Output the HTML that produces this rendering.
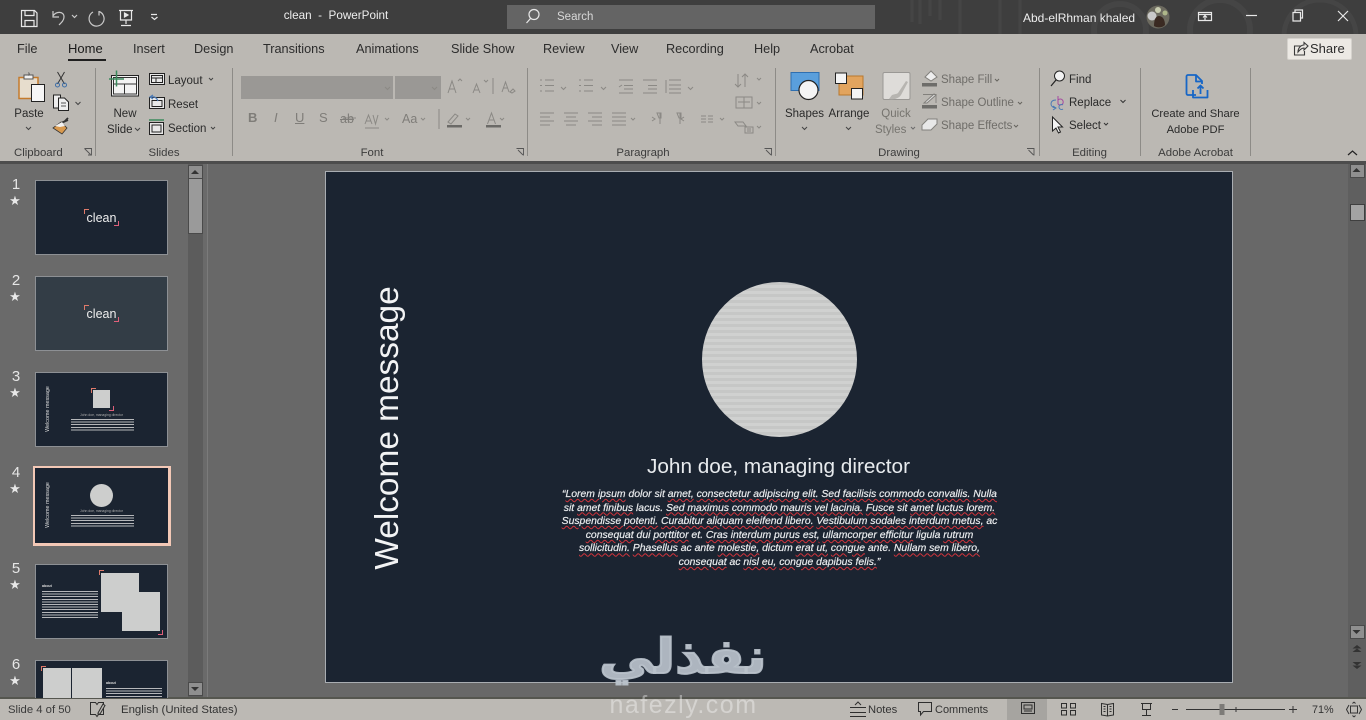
<!DOCTYPE html>
<html><head><meta charset="utf-8"><title>clean - PowerPoint</title>
<style>
html,body{margin:0;padding:0;width:1366px;height:720px;overflow:hidden;background:#686868;font-family:"Liberation Sans","DejaVu Sans",sans-serif}
.a{position:absolute}
.t{position:absolute;white-space:nowrap;font-size:11.5px;line-height:16px;color:#2a2a2a}
.c{text-align:center;transform:translateX(-50%)}
.g{color:#76746f}
.w{color:#eee}
.tab{font-size:12.7px;color:#2c2c2c}
.gl{font-size:11.4px;color:#3c3c3c}
.num{position:absolute;left:8px;width:16px;text-align:center;color:#e6e6e6;font-size:15px;line-height:16px}
.star{position:absolute;left:7px;width:16px;text-align:center;color:#e8e8e8;font-size:13px;line-height:12px}
.th{position:absolute;left:35px;width:131px;height:73px;background:#1b2431;border:1px solid #8d9094;overflow:hidden}
.th .x{position:absolute;white-space:nowrap}
.clean{left:0;width:131px;top:29px;text-align:center;color:#eee;font-size:12.5px;line-height:16px}
.tick{position:absolute;width:4px;height:4px}
.lines{position:absolute;opacity:.8;background:repeating-linear-gradient(#dcdcdc 0 1px,#1b2431 1px 2.6px)}
.gr{position:absolute;background:#cdcecd}
.sq{white-space:nowrap;text-align:center;width:500px;left:529.5px;position:absolute;font-style:italic;color:#e9ebed;font-size:10.4px;line-height:13.6px;font-family:"Liberation Sans",sans-serif;-webkit-text-stroke:.2px #e9ebed}
.sq u{text-decoration:underline wavy #d2343c 1px;text-underline-offset:1px}
</style></head>
<body>
<!-- backgrounds -->
<div class="a" style="left:0;top:0;width:1366px;height:34px;background:#3e3e3e"></div>
<div class="a" style="left:0;top:34px;width:1366px;height:127px;background:#bbb8b3"></div>
<div class="a" style="left:0;top:161px;width:1366px;height:3px;background:#4d4d4d"></div>
<div class="a" style="left:0;top:164px;width:188px;height:535px;background:#6a6a6a"></div>
<div class="a" style="left:188px;top:164px;width:15px;height:535px;background:#5c5c5c"></div>
<div class="a" style="left:203px;top:164px;width:5px;height:535px;background:#6a6a6a;border-right:1px solid #7b7b7b;box-sizing:border-box"></div>
<div class="a" style="left:208px;top:164px;width:1140px;height:533px;background:#686868"></div>
<div class="a" style="left:1348px;top:164px;width:18px;height:533px;background:#5f5f5f"></div>
<div class="a" style="left:0;top:697px;width:1366px;height:2px;background:#55564f"></div>
<div class="a" style="left:0;top:699px;width:1366px;height:21px;background:#bcb9b4"></div>
<div class="a" style="left:1007px;top:699px;width:40px;height:21px;background:#a6a4a0"></div>

<!-- titlebar background art -->
<svg class="a" style="left:0;top:0" width="1366" height="34" viewBox="0 0 1366 34" fill="none">
<g stroke="#454545" stroke-width="3">
<path d="M912 0v22M920 0v24M930 0v16M940 0v20M960 0v34M1000 0v34M1020 0v34"/>
<circle cx="1120" cy="30" r="26" stroke-width="6"/><circle cx="1220" cy="30" r="30" stroke-width="6"/><circle cx="1320" cy="36" r="36" stroke-width="5"/>
</g>
</svg>

<!-- search -->
<div class="a" style="left:507px;top:5px;width:368px;height:24px;background:#646464"></div>

<!-- slide thumbnails -->
<div class="num" style="top:177px">1</div><div class="star" style="top:195px">★</div>
<div class="num" style="top:273px">2</div><div class="star" style="top:291px">★</div>
<div class="num" style="top:369px">3</div><div class="star" style="top:387px">★</div>
<div class="num" style="top:465px">4</div><div class="star" style="top:483px">★</div>
<div class="num" style="top:561px">5</div><div class="star" style="top:579px">★</div>
<div class="num" style="top:657px">6</div><div class="star" style="top:675px">★</div>

<div class="th" style="top:180px"><div class="x clean">clean</div>
<div class="tick" style="left:48px;top:28px;border-left:1px solid #e07a6a;border-top:1px solid #e07a6a"></div>
<div class="tick" style="left:78px;top:40px;border-right:1px solid #e0607a;border-bottom:1px solid #e0607a"></div></div>
<div class="th" style="top:276px;background:#333d46"><div class="x clean">clean</div>
<div class="tick" style="left:48px;top:28px;border-left:1px solid #e07a6a;border-top:1px solid #e07a6a"></div>
<div class="tick" style="left:78px;top:40px;border-right:1px solid #e0607a;border-bottom:1px solid #e0607a"></div></div>
<div class="th" style="top:372px">
<div class="gr" style="left:57px;top:17px;width:17px;height:18px"></div>
<div class="tick" style="left:55px;top:15px;border-left:1px solid #e07a6a;border-top:1px solid #e07a6a"></div>
<div class="tick" style="left:73px;top:33px;border-right:1px solid #e0607a;border-bottom:1px solid #e0607a"></div>
<div class="x" style="left:-11px;top:33px;width:46px;text-align:center;color:#ddd;font-size:5.4px;line-height:6px;transform:rotate(-90deg)">Welcome message</div>
<div class="x" style="left:35px;top:40px;width:61px;text-align:center;color:#aaa;font-size:3.4px;line-height:4px">John doe, managing director</div>
<div class="lines" style="left:35px;top:46px;width:63px;height:13px"></div></div>
<div class="a" style="left:33px;top:466px;width:132px;height:74px;border:3px solid #f3c8b6"></div>
<div class="th" style="top:468px;border-color:#1b2431;height:73px">
<div class="a" style="left:54px;top:15px;width:23px;height:23px;border-radius:50%;background:#cdcecd"></div>
<div class="x" style="left:-11px;top:33px;width:46px;text-align:center;color:#ddd;font-size:5.4px;line-height:6px;transform:rotate(-90deg)">Welcome message</div>
<div class="x" style="left:35px;top:40px;width:61px;text-align:center;color:#aaa;font-size:3.4px;line-height:4px">John doe, managing director</div>
<div class="lines" style="left:35px;top:46px;width:63px;height:13px"></div></div>
<div class="th" style="top:564px">
<div class="gr" style="left:65px;top:8px;width:38px;height:39px"></div>
<div class="gr" style="left:86px;top:27px;width:38px;height:39px"></div>
<div class="tick" style="left:63px;top:5px;border-left:1px solid #e07a6a;border-top:1px solid #e07a6a"></div>
<div class="tick" style="left:122px;top:65px;border-right:1px solid #e0607a;border-bottom:1px solid #e0607a"></div>
<div class="x" style="left:6px;top:19px;color:#ddd;font-size:3.6px;line-height:5px;font-weight:bold">about</div>
<div class="lines" style="left:6px;top:26px;width:56px;height:27px"></div></div>
<div class="a" style="left:35px;top:660px;width:131px;height:37px;background:#1b2431;border-left:1px solid #8d9094;border-right:1px solid #8d9094;border-top:1px solid #8d9094;overflow:hidden">
<div class="gr" style="left:7px;top:7px;width:28px;height:40px"></div>
<div class="gr" style="left:36px;top:7px;width:30px;height:40px"></div>
<div class="tick" style="left:5px;top:5px;border-left:1px solid #e07a6a;border-top:1px solid #e07a6a"></div>
<div class="a" style="left:70px;top:20px;color:#ddd;font-size:3.6px;font-weight:bold;line-height:5px">about</div>
<div class="lines" style="left:70px;top:27px;width:56px;height:12px"></div></div>

<!-- main slide -->
<div class="a" style="left:325px;top:171px;width:906px;height:510px;background:#1b2431;border:1px solid #a9adb2"></div>
<div class="a" style="left:702px;top:282px;width:155px;height:155px;border-radius:50%;background:repeating-linear-gradient(#c6c7c6 0 3px,#d0d1d0 3px 6px)"></div>
<div class="t" style="left:388px;top:427.5px;font-size:33.4px;line-height:38px;color:#f2f3f4;transform:translate(-50%,-50%) rotate(-90deg)">Welcome message</div>
<div class="t c" style="left:778.5px;top:453.5px;font-size:20.75px;line-height:26px;color:#e8ebee">John doe, managing director</div>
<div class="sq" style="top:488px">“<u>Lorem ipsum</u> dolor sit <u>amet,</u> <u>consectetur adipiscing elit.</u> <u>Sed facilisis commodo convallis.</u> <u>Nulla</u></div>
<div class="sq" style="top:501.6px">sit <u>amet finibus</u> lacus. <u>Sed maximus commodo mauris vel lacinia.</u> <u>Fusce</u> sit <u>amet luctus lorem.</u></div>
<div class="sq" style="top:515.2px"><u>Suspendisse potenti.</u> <u>Curabitur aliquam eleifend libero.</u> <u>Vestibulum sodales interdum metus,</u> ac</div>
<div class="sq" style="top:528.8px"><u>consequat</u> dui <u>porttitor</u> et. <u>Cras interdum purus est,</u> <u>ullamcorper efficitur</u> ligula <u>rutrum</u></div>
<div class="sq" style="top:542.4px"><u>sollicitudin.</u> <u>Phasellus</u> ac ante <u>molestie,</u> dictum <u>erat ut,</u> <u>congue</u> ante. <u>Nullam sem libero,</u></div>
<div class="sq" style="top:556px"><u>consequat</u> ac <u>nisl eu,</u> <u>congue dapibus felis.</u>”</div>

<!-- scrollbar parts -->
<div class="a" style="left:188px;top:165px;width:13px;height:12px;background:#8f8f8f;border:1px solid #4a4a4a"></div>
<div class="a" style="left:188px;top:178px;width:13px;height:54px;background:#9a9a9a;border:1px solid #4a4a4a"></div>
<div class="a" style="left:188px;top:682px;width:13px;height:12px;background:#8f8f8f;border:1px solid #4a4a4a"></div>
<div class="a" style="left:1350px;top:164px;width:13px;height:12px;background:#8f8f8f;border:1px solid #4a4a4a"></div>
<div class="a" style="left:1350px;top:204px;width:13px;height:15px;background:#a3a3a3;border:1px solid #3f3f3f"></div>
<div class="a" style="left:1350px;top:625px;width:13px;height:12px;background:#8f8f8f;border:1px solid #4a4a4a"></div>

<!-- group separators -->
<div class="a" style="left:95px;top:68px;width:1px;height:88px;background:#8d8b87"></div>
<div class="a" style="left:232px;top:68px;width:1px;height:88px;background:#8d8b87"></div>
<div class="a" style="left:527px;top:68px;width:1px;height:88px;background:#8d8b87"></div>
<div class="a" style="left:775px;top:68px;width:1px;height:88px;background:#8d8b87"></div>
<div class="a" style="left:1039px;top:68px;width:1px;height:88px;background:#8d8b87"></div>
<div class="a" style="left:1140px;top:68px;width:1px;height:88px;background:#8d8b87"></div>
<div class="a" style="left:1250px;top:68px;width:1px;height:88px;background:#8d8b87"></div>

<!-- font boxes -->
<div class="a" style="left:241px;top:76px;width:152px;height:23px;background:#9a9895"></div>
<div class="a" style="left:395px;top:76px;width:46px;height:23px;background:#9a9895"></div>
<div class="a" style="left:1287px;top:38px;width:65px;height:22px;background:#ece9e4;border:1px solid #d5d2cd;box-sizing:border-box;border-radius:2px"></div>

<!-- icon layer -->
<svg class="a" style="left:0;top:0" width="1366" height="720" viewBox="0 0 1366 720" fill="none">
<!-- QAT -->
<g stroke="#e8e8e8" stroke-width="1.2">
<path d="M21.5 10.5h13l2.500 2.500v13.500h-15.500z"/><path d="M25 10.500v5h9v-5M25 26.500v-6h9v6"/>
<path d="M53 11v6h6M53 16c3-5 11-5 11 1 0 3-2 5-5 8" stroke="#c9c9c9"/>
<path d="M72 15l2.500 2.500L77 15" stroke="#c9c9c9"/>
<path d="M99 11.500a7.500 7.500 0 1 1-6 .5M99 11v4.500" stroke="#c9c9c9"/>
<path d="M119 10.500h14M120.500 11v9h11v-9M126 20v4M121 25.500h10"/>
<path d="M124.500 13l3.500 2-3.500 2z" fill="#e8e8e8"/>
<path d="M151 14.500h6M151.500 17l3 2.500 3-2.500"/>
<!-- search -->
<circle cx="534" cy="14.500" r="5"/><path d="M530.500 18.500l-4 4.500"/>
<!-- window controls -->
<path d="M1198.500 12.500h13v8h-13zM1198.500 14.500h13M1205 20v-4M1203 17.500l2-2 2 2"/>
<path d="M1246 15.500h11"/>
<path d="M1293 12.500h7.500v8.500h-7.500zM1295 12v-2h7.500v8h-2"/>
<path d="M1338 11l10 10M1348 11l-10 10"/>
</g>
<circle cx="1158" cy="17" r="11.500" fill="#6c6a5f"/><circle cx="1158" cy="10" r="3" fill="#c9cdb0"/><circle cx="1152" cy="16" r="4.500" fill="#c9c9c9"/><path d="M1154 26c0-7 2-10 5-10s6 3 6 9c-3 3-8 3-11 1z" fill="#3a2a22"/>
<circle cx="1165" cy="13" r="2.500" fill="#aeb78a"/>
<!-- share icon -->
<g stroke="#3a3a3a" stroke-width="1.100"><path d="M1301 46h-6.500v9h10v-4"/><path d="M1298 52c0-4 3-7 6-7v-2.500l4 3.500-4 4V48c-2 0-4 1.500-6 4z"/></g>
<!-- clipboard -->
<path d="M19 77.500h19v21H19z" fill="#e7ddcd" stroke="#c57b2c" stroke-width="1.500"/>
<path d="M24 75h9v4h-9z" fill="#f2f2f2" stroke="#555"/><path d="M28.500 72.500a2 2 0 0 1 0 3" stroke="#555"/>
<path d="M31.500 84.500h13v17h-13z" fill="#f6f6f6" stroke="#222"/>
<!-- scissors -->
<g stroke="#333"><path d="M57.500 72l7 12M64.500 72l-7 12"/></g><circle cx="57.500" cy="85" r="2" stroke="#3c6ea8"/><circle cx="64.500" cy="85" r="2" stroke="#3c6ea8"/>
<!-- copy -->
<g stroke="#222" fill="#efefef"><path d="M53.500 95h7v13h-7z"/><path d="M58.500 98h6l4 4v8.500h-10z"/></g>
<path d="M61 103h5M61 106h5" stroke="#555"/>
<path d="M75.500 102l2.500 2.500 2.500-2.500" stroke="#444"/>
<!-- painter -->
<path d="M53 128l8-6 6 6-5 6z" fill="#d99a4f" stroke="#333" stroke-width=".8"/><path d="M61 123l7-3M64 122l4-4" stroke="#333" stroke-width="1.800"/><path d="M55 126l7-4 3 4-5 1z" fill="#f2f2f2"/>
<path d="M26 127l2.500 2.500 2.500-2.500" stroke="#444"/>
<!-- new slide -->
<path d="M111.500 75.500h27v20.500h-27z" fill="#f2f2f2" stroke="#222"/><path d="M113.500 77.500h23v16.500h-23z" stroke="#333"/><path d="M113.500 84h23M124.500 84v10" stroke="#333"/>
<path d="M116.500 70.500v16M109 79h15" stroke="#3b8a5c" stroke-width="1.500"/>
<path d="M135 128l2.500 2.500 2.500-2.500" stroke="#444"/>
<!-- layout/reset/section -->
<g stroke="#222"><path d="M149.500 73.500h15v11h-15z" fill="#e8e8e8"/><path d="M151.500 75.500h11v7h-11zM151.500 78h11M156 78v4"/>
<path d="M149.500 97.500h15v11h-15z" fill="#e8e8e8"/><path d="M152 100.500h10v6h-10z"/>
<path d="M149.500 122.500h14v12h-14z" fill="#e8e8e8"/><path d="M152 125h9v7h-9z"/></g>
<path d="M153 99l-3-2 3-2M150 97c5-1 7 1 8 4" stroke="#4a79b5" stroke-width="1.200"/>
<path d="M149 120h15" stroke="#3b8a5c" stroke-width="1.500"/>
<g stroke="#444"><path d="M209 78l2 2 2-2M211 127l2 2 2-2"/></g>
<!-- font area disabled -->
<g stroke="#8b8985">
<path d="M385 87l2.500 2.500L390 87M432 87l2.500 2.500L437 87"/>
<path d="M448 93l4-12 4 12M449.500 89h5M458 81l2-2 2 2M473 93l3.500-9 3.500 9M474.500 90h4M484 80l2 2 2-2"/>
<path d="M493 78v16"/>
<path d="M502 92l3.500-10 3.500 10M503 88h5M510 92l3-3 2 2-3 2z"/>
<path d="M343 118h13"/><path d="M365 124l3.500-9 3.500 9M366 121h5M373 115l2.500 9 2.500-9"/><path d="M365 128h14"/>
<path d="M385 118l2 2 2-2"/>
<path d="M421 118l2 2 2-2"/><path d="M439 109v20"/>
<path d="M466 118l2 2 2-2M500 118l2 2 2-2"/>
<path d="M448 122l7-8 3 2-7 8z"/><path d="M487.500 124l4-11 4 11M489 120h5"/>
</g>
<path d="M447 125h15v2.500h-15zM486 125h15v2.500h-15z" fill="#6b6a67"/>
<!-- paragraph -->
<g stroke="#8b8985">
<path d="M545 80h9M545 85.500h9M545 91h9M540 80h2M540 85.500h2M540 91h2"/><path d="M561 87l2.500 2.500L566 87"/>
<path d="M584 80h9M584 85.500h9M584 91h9M579 80h2M579 85.500h2M579 91h2"/><path d="M601 87l2.500 2.500L606 87"/>
<path d="M619 80h14M624 85.500h9M624 89h9M619 93h14M619 87l3-2"/>
<path d="M643 80h14M648 85.500h9M648 89h9M643 93h14"/>
<path d="M669 80h12M669 85h12M669 89h12M669 93h12M666 80v13"/><path d="M688 87l2.500 2.500L693 87"/>
<path d="M540 113h14M540 117h10M540 121h14M540 125h10"/>
<path d="M564 113h14M566 117h10M564 121h14M566 125h10"/>
<path d="M588 113h14M592 117h10M588 121h14M592 125h10"/>
<path d="M612 113h14M612 117h14M612 121h14M612 125h14"/><path d="M631 118l2 2 2-2"/>
<path d="M652 117l3 2-3 2M660 113v11M657 113h4v5h-2zM680 113v11M677 113h4v5h-2zM684 117l-3 2 3 2"/>
<path d="M701 116h5M701 119h5M701 122h5M708 116h5M708 119h5M708 122h5"/><path d="M720 118l2 2 2-2"/>
<path d="M738 74v13M735 84l3 3 3-3M745 74v13M742 77l3-3 3 3"/><path d="M757 78l2 2 2-2"/>
<path d="M736 97h16v11h-16zM744 97v11M738 102h12"/><path d="M757 102l2 2 2-2"/>
<path d="M735 122h8l3 4h-8zM745 127h8v6h-8zM747 129h4M747 131h4"/><path d="M757 126l2 2 2-2"/>
</g>
<!-- dialog launchers -->
<g stroke="#555" stroke-width=".9"><path d="M84.500 148.500h7v7M84.500 148.500l6 6M88 155h3.500"/><path d="M516.500 148.500h7v7M518 150l5 5"/><path d="M764.500 148.500h7v7M766 150l5 5"/><path d="M1027 148.500h7v7M1028.500 150l5 5"/></g>
<!-- shapes -->
<path d="M791 72.500h28v18h-28z" fill="#5a9fdc" stroke="#2f6fb0"/>
<circle cx="808.500" cy="90" r="9.500" fill="#f4f4f4" stroke="#222" stroke-width="1.200"/>
<path d="M802 127l2.500 2.500L807 127M846 127l2.500 2.500L851 127" stroke="#444"/>
<!-- arrange -->
<path d="M839 76h24v19h-24z" fill="#e2a45e" stroke="#b8772e"/>
<path d="M835.500 73h11v10.500h-11z" fill="#f4f4f4" stroke="#222"/><path d="M851.500 88.500h11v10.500h-11z" fill="#f4f4f4" stroke="#222"/>
<!-- quick styles -->
<rect x="883" y="72.500" width="27" height="27" rx="1.500" fill="#dedcd9" stroke="#9a9895"/><path d="M889 99l3-4c3-1 5-1 6-2l8-12 2 1-7 13c-2 3-6 5-12 4z" fill="#b7b5b1"/>
<path d="M911 127l2 2 2-2" stroke="#6a6a6a"/>
<!-- shape fill etc -->
<g stroke="#82807c"><path d="M925 77l6-6 6 6-6 4z" fill="#eeeeee"/><path d="M924 103l10-9 2 1-9 8z" fill="#dddddd"/><path d="M923 94.500h13v8.500" stroke-width=".9"/><path d="M922 125l6-6h9v5l-6 6h-9z" fill="#e8e8e8"/></g>
<path d="M922 83h15v3.500h-15zM922 105h15v3.500h-15z" fill="#6e6d6a"/>
<g stroke="#66645f"><path d="M995 79l2 2 2-2M1018 102l2 2 2-2M1014 125l2 2 2-2"/></g>
<!-- editing -->
<circle cx="1059.500" cy="76" r="5" fill="#f2f2f2" stroke="#222"/><path d="M1056 80l-5 6" stroke="#222" stroke-width="1.200"/>
<path d="M1058 96v8M1058 100a3 3 0 1 1 0 4" stroke="#a649a0"/><path d="M1063 105a2.500 2.500 0 1 0 0 4" stroke="#4a79b5"/>
<path d="M1056 100c-4 0-5 2-5 4s2 4 5 4M1053 106l3 2-3 2" stroke="#4a79b5"/>
<path d="M1052.500 117v14l3.500-3 2.500 5 2-1-2.500-5h4.500z" fill="#f4f4f4" stroke="#222"/>
<path d="M1120.500 100l2.500 2.500 2.500-2.500M1104 123l2 2 2-2" stroke="#333"/>
<!-- acrobat -->
<g stroke="#1766c6" stroke-width="1.800" stroke-linejoin="round"><path d="M1196 95h-8a1.500 1.500 0 0 1-1.500-1.500v-17a1.500 1.500 0 0 1 1.500-1.500h8l6 6v3"/><path d="M1196 75v6.500h6"/><path d="M1193 90v7.500h14.500V90"/><path d="M1200.500 94v-8M1197.500 88.500l3-3 3 3"/></g>
<path d="M1348 155l4.500-4 4.500 4" stroke="#222" stroke-width="1.200"/>
<!-- scroll arrows -->
<path d="M195 170l-4 4h8zM195 691l-4-4h8zM1356.500 168l-4 4h8zM1356.500 634l-4-4h8z" fill="#333"/>
<path d="M1357 645l-4.500 3.500h9zM1352.500 652h9l-4.500-3.500zM1357 669l-4.500-3.500h9zM1352.500 662h9l-4.500 3.500z" fill="#333"/>
<!-- status bar -->
<g stroke="#2e2e2e"><path d="M90.500 702.500h5l1.500 2 1.500-2h5v12h-5l-1.500 2-1.500-2h-5z" stroke-width="1"/><path d="M98 713l5-9 2 1.500-5 8.500h-2z" fill="#bcb9b4"/>
<path d="M850 707.500h16M850 712.500h16M850 716.500h16M855 705l3-3 3 3"/>
<path d="M918.500 702.500h13v9h-8l-3 3.500v-3.500h-2z"/>
<path d="M1021.500 702.500h13v11h-13zM1024 705h8v4h-8zM1024 711h8" stroke-width="1"/>
<path d="M1061.500 703.500h5v4.500h-5zM1070.500 703.500h5v4.500h-5zM1061.500 710.500h5v4.500h-5zM1070.500 710.500h5v4.500h-5z"/>
<path d="M1101.500 703.500l6 1 6-1v11.500l-6 1-6-1zM1107.500 704.500v11M1103.500 706.500h2M1103.500 709h2M1103.500 711.500h2M1109.500 706.500h2M1109.500 709h2M1109.500 711.500h2"/>
<path d="M1141 703.500h11M1142.500 703.500v6h8v-6M1146.500 709.500v6M1142 715.500h9"/>
</g>
<path d="M1172 709.500h6M1186 709.500h99M1236 707v5M1289 709.500h8M1293 706v7" stroke="#333"/>
<rect x="1219.500" y="704" width="5" height="11" fill="#7d7b78"/>
<path d="M1349 705l-2.500 4.500 2.500 4.500M1359 705l2.500 4.500-2.500 4.500M1354 702l-1.500 1.500M1354 702l1.500 1.500M1354 717l-1.500-1.500M1354 717l1.500-1.500" stroke="#333"/><rect x="1350.500" y="706" width="7" height="7" stroke="#333"/>
</svg>

<!-- titlebar text -->
<div class="t c w" style="left:336px;top:8px;font-size:11.7px">clean &nbsp;-&nbsp; PowerPoint</div>
<div class="t" style="left:557px;top:9px;font-size:11.5px;color:#d8d8d8">Search</div>
<div class="t w" style="left:1023px;top:10px;font-size:12px">Abd-elRhman khaled</div>

<!-- tabs -->
<div class="t tab" style="left:17px;top:41px">File</div>
<div class="t tab" style="left:68px;top:41px;color:#1a1a1a;font-size:13px">Home</div>
<div class="a" style="left:68px;top:59px;width:38px;height:2px;background:#1f1f1f"></div>
<div class="t tab" style="left:133px;top:41px">Insert</div>
<div class="t tab" style="left:194px;top:41px">Design</div>
<div class="t tab" style="left:263px;top:41px">Transitions</div>
<div class="t tab" style="left:356px;top:41px">Animations</div>
<div class="t tab" style="left:451px;top:41px">Slide Show</div>
<div class="t tab" style="left:543px;top:41px">Review</div>
<div class="t tab" style="left:611px;top:41px">View</div>
<div class="t tab" style="left:666px;top:41px">Recording</div>
<div class="t tab" style="left:754px;top:41px">Help</div>
<div class="t tab" style="left:810px;top:41px">Acrobat</div>
<div class="t" style="left:1310px;top:41px;font-size:13px;color:#2b2b2b">Share</div>

<!-- ribbon labels -->
<div class="t c" style="left:29px;top:106px">Paste</div>
<div class="t c" style="left:125px;top:106px">New</div>
<div class="t" style="left:107px;top:122px">Slide</div>
<div class="t" style="left:168px;top:73px">Layout</div>
<div class="t" style="left:168px;top:97px">Reset</div>
<div class="t" style="left:168px;top:121px">Section</div>
<div class="t" style="left:248px;top:110px;font-size:13px;font-weight:bold;color:#7f7d79">B</div>
<div class="t" style="left:274px;top:110px;font-size:13px;font-style:italic;color:#7f7d79">I</div>
<div class="t" style="left:295px;top:110px;font-size:13px;color:#7f7d79;text-decoration:underline">U</div>
<div class="t" style="left:319px;top:110px;font-size:13px;color:#7f7d79">S</div>
<div class="t" style="left:340px;top:111px;font-size:12.5px;color:#7f7d79;text-decoration:line-through">ab</div>
<div class="t" style="left:402px;top:111px;font-size:12.5px;color:#7f7d79">Aa</div>
<div class="t" style="left:941px;top:72px;color:#6f6d69">Shape Fill</div>
<div class="t" style="left:941px;top:95px;color:#6f6d69">Shape Outline</div>
<div class="t" style="left:941px;top:118px;color:#6f6d69">Shape Effects</div>
<div class="t c" style="left:804.5px;top:106px">Shapes</div>
<div class="t c" style="left:849px;top:106px">Arrange</div>
<div class="t c g" style="left:896px;top:106px">Quick</div>
<div class="t g" style="left:875px;top:122px">Styles</div>
<div class="t" style="left:1069px;top:72px">Find</div>
<div class="t" style="left:1069px;top:95px">Replace</div>
<div class="t" style="left:1069px;top:118px">Select</div>
<div class="t c" style="left:1195.5px;top:106px;font-size:11.2px">Create and Share</div>
<div class="t c" style="left:1195.5px;top:122px;font-size:11.2px">Adobe PDF</div>

<!-- group labels -->
<div class="t gl" style="left:14px;top:144.5px">Clipboard</div>
<div class="t gl c" style="left:164px;top:144.5px">Slides</div>
<div class="t gl c" style="left:372px;top:144.5px">Font</div>
<div class="t gl c" style="left:643px;top:144.5px">Paragraph</div>
<div class="t gl c" style="left:899px;top:144.5px">Drawing</div>
<div class="t gl c" style="left:1089.5px;top:144.5px">Editing</div>
<div class="t gl c" style="left:1195.5px;top:144.5px">Adobe Acrobat</div>

<!-- status bar text -->
<div class="t" style="left:8px;top:702px;font-size:11.3px;color:#3a3a3a">Slide 4 of 50</div>
<div class="t" style="left:121px;top:702px;font-size:11.4px;color:#333">English (United States)</div>
<div class="t" style="left:868px;top:702px;font-size:11.2px;color:#333">Notes</div>
<div class="t" style="left:935px;top:702px;font-size:11px;color:#333">Comments</div>
<div class="t" style="left:1312px;top:702px;font-size:10.8px;color:#333">71%</div>

<!-- watermark -->
<div class="t" dir="rtl" style="left:683px;top:624px;font-family:'DejaVu Sans',sans-serif;font-weight:bold;font-size:48px;line-height:66px;color:rgba(186,194,203,.92);-webkit-text-stroke:2px rgba(186,194,203,.92);transform:translateX(-50%) scaleX(1.14)">نفذلي</div>
<div class="t c" style="left:683.5px;top:692px;font-size:25px;line-height:26px;letter-spacing:1.500px;color:rgba(255,255,255,.38)">nafezly.com</div>
</body></html>
